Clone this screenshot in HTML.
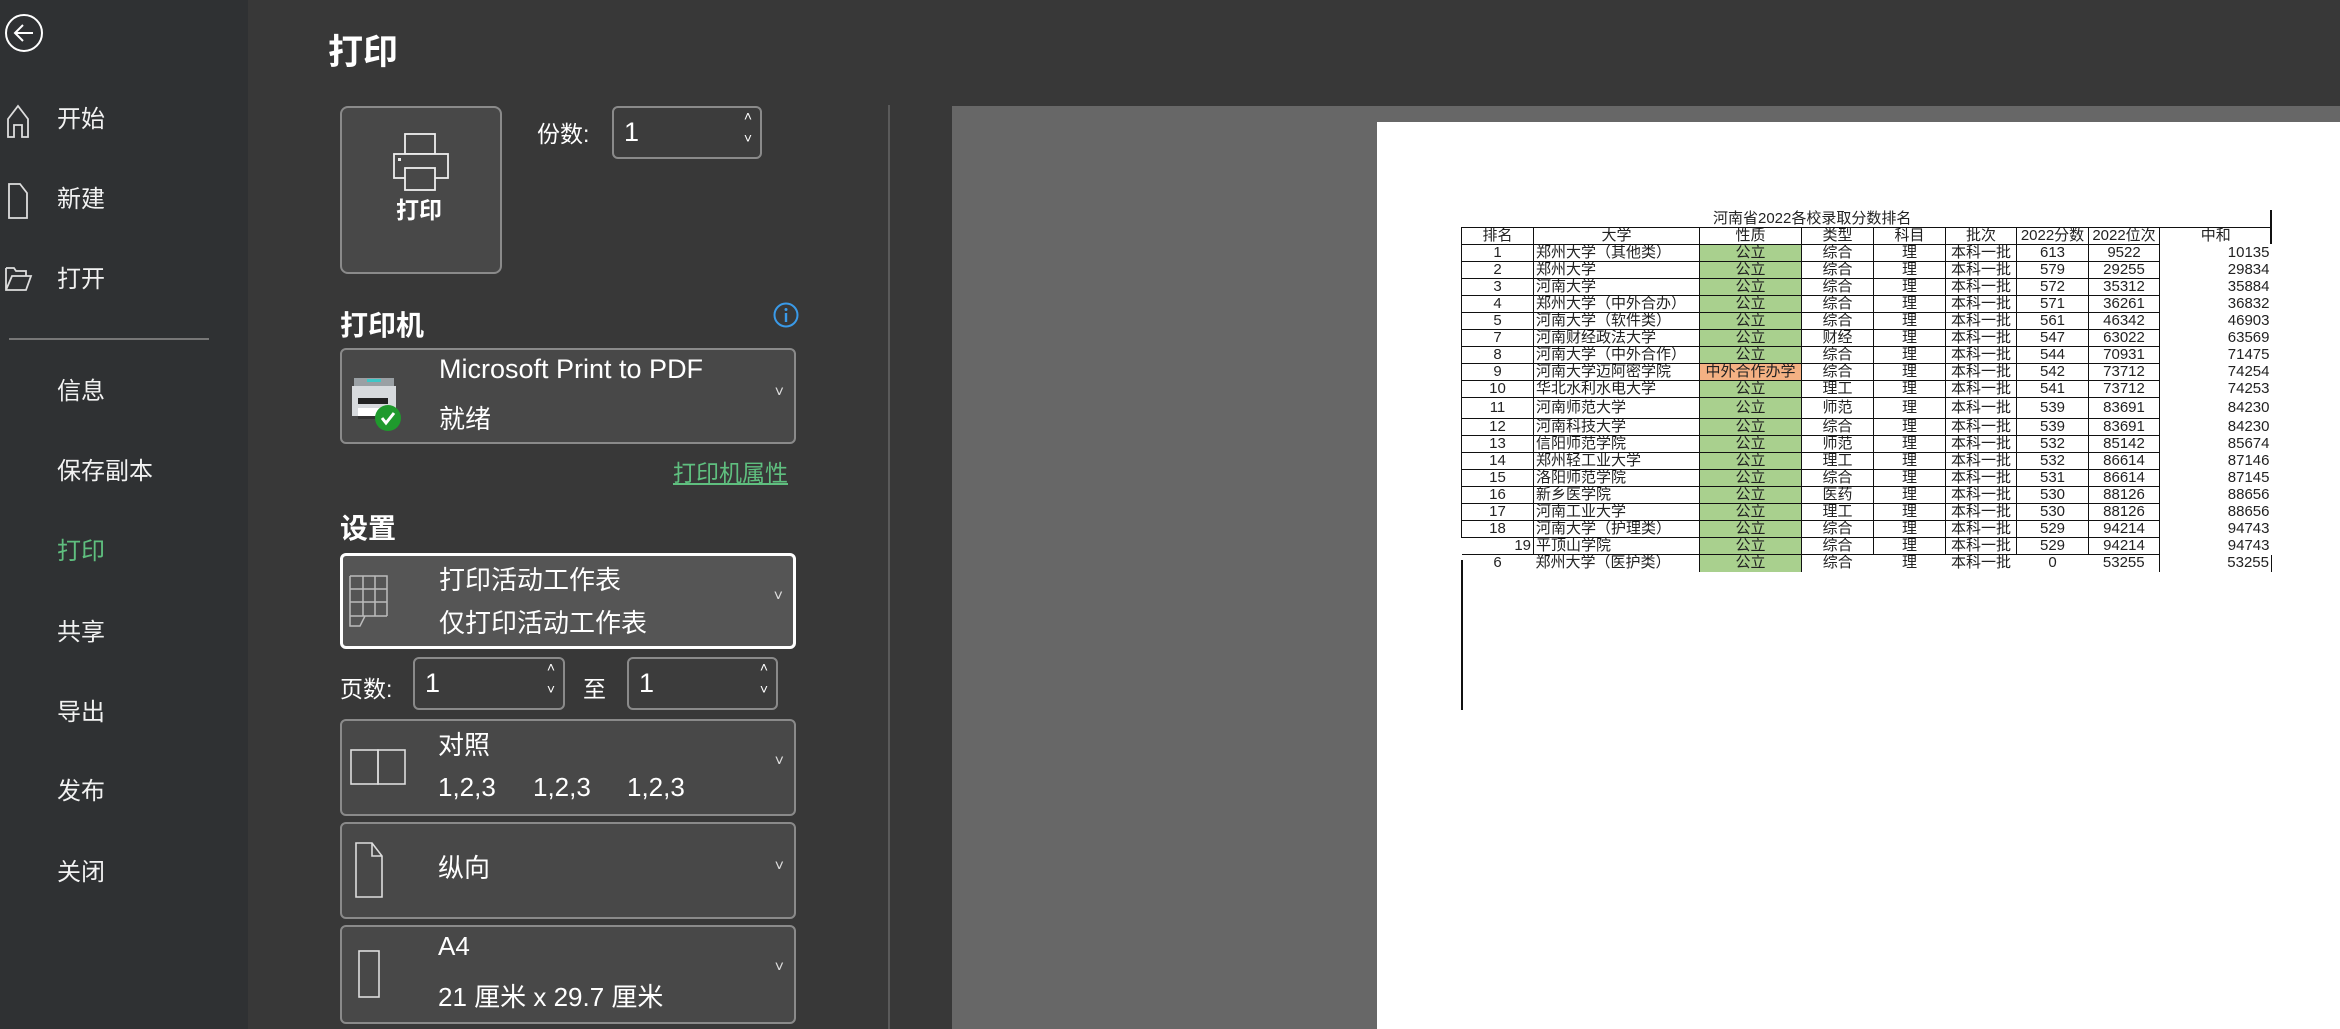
<!DOCTYPE html>
<html><head><meta charset="utf-8">
<style>
*{margin:0;padding:0;box-sizing:border-box}
body{width:2340px;height:1029px;overflow:hidden;background:#383838;font-family:"Liberation Sans","Noto Sans CJK SC",sans-serif;color:#fff;position:relative}
.abs{position:absolute}
#side{left:0;top:0;width:248px;height:1029px;background:#2f3133}
.nav{position:absolute;left:57px;font-size:24px;line-height:30px;color:#f2f2f2}
.box{position:absolute;border:2px solid #8a8a8a;border-radius:6px;background:#484848}
.chev{position:absolute;right:10px;font-size:16px;color:#ddd}
#page{left:1377px;top:122px;width:963px;height:907px;background:#fff}
table{border-collapse:collapse;position:absolute;left:1461px;top:227px;table-layout:fixed;font-size:15px;color:#222;font-family:"Liberation Sans","Noto Sans CJK SC",sans-serif}
td{border:1.4px solid #111;height:17px;line-height:14px;padding:0 2px;text-align:center;white-space:nowrap;overflow:hidden}
td.l{text-align:left}
td.z{border:none;text-align:right}
td.g{background:#a9d08e}
td.o{background:#f4b183}
tr.tall td{height:21px}
</style></head><body>
<div id="side" class="abs"></div>
<svg class="abs" style="left:4px;top:13px" width="42" height="42" viewBox="0 0 42 42"><circle cx="20" cy="20" r="18" fill="none" stroke="#fff" stroke-width="2"/><path d="M29 20H12M19 12l-8 8 8 8" fill="none" stroke="#fff" stroke-width="2"/></svg>
<svg class="abs" style="left:7px;top:104px" width="22" height="34" viewBox="0 0 22 34"><path d="M1 15L11 2l10 13v18h-6V21H7v12H1z" fill="none" stroke="#ddd" stroke-width="1.8"/></svg>
<div class="nav" style="top:105px">开始</div>
<svg class="abs" style="left:8px;top:183px" width="20" height="36" viewBox="0 0 20 36"><path d="M1 1h11l7 9v25H1z" fill="none" stroke="#ddd" stroke-width="1.8"/></svg>
<div class="nav" style="top:185px">新建</div>
<svg class="abs" style="left:5px;top:266px" width="28" height="26" viewBox="0 0 28 26"><path d="M1 2h8l2 3h10v5M1 2v22h20l5-14H7L1 24" fill="none" stroke="#ddd" stroke-width="1.8"/></svg>
<div class="nav" style="top:265px">打开</div>
<div class="abs" style="left:9px;top:338px;width:200px;height:2px;background:#777"></div>
<div class="nav" style="top:377px">信息</div>
<div class="nav" style="top:457px">保存副本</div>
<div class="nav" style="top:537px;color:#5fbf7f">打印</div>
<div class="nav" style="top:618px">共享</div>
<div class="nav" style="top:698px">导出</div>
<div class="nav" style="top:777px">发布</div>
<div class="nav" style="top:858px">关闭</div>

<div class="abs" style="left:328px;top:24px;font-size:35px;font-weight:bold">打印</div>
<div class="box" style="left:340px;top:106px;width:162px;height:168px;border-radius:8px">
<svg class="abs" style="left:50px;top:24px" width="60" height="60" viewBox="0 0 60 60"><rect x="13" y="2" width="30" height="20" fill="none" stroke="#eee" stroke-width="1.8"/><rect x="2" y="22" width="54" height="24" fill="#484848" stroke="#eee" stroke-width="1.8"/><rect x="13" y="36" width="30" height="22" fill="#484848" stroke="#eee" stroke-width="1.8"/><rect x="6" y="26" width="3" height="3" fill="#eee"/></svg>
<div class="abs" style="left:54px;top:83px;font-size:23px;font-weight:bold">打印</div></div>
<div class="abs" style="left:537px;top:115px;font-size:23px">份数:</div>
<div class="box" style="left:612px;top:106px;width:150px;height:53px;background:#3c3c3c"><div class="abs" style="left:10px;top:9px;font-size:27px">1</div><div class="abs" style="right:8px;top:0;font-size:14px">˄</div><div class="abs" style="right:8px;top:22px;font-size:14px">˅</div></div>
<div class="abs" style="left:888px;top:105px;width:2px;height:924px;background:#5a5a5a"></div>

<div class="abs" style="left:340px;top:304px;font-size:28px;font-weight:bold">打印机</div>
<svg class="abs" style="left:772px;top:301px" width="28" height="28" viewBox="0 0 28 28"><circle cx="14" cy="14" r="11.5" fill="none" stroke="#3a9ae8" stroke-width="2"/><rect x="12.8" y="12" width="2.4" height="9" fill="#3a9ae8"/><circle cx="14" cy="8.5" r="1.5" fill="#3a9ae8"/></svg>
<div class="box" style="left:340px;top:348px;width:456px;height:96px">
<svg class="abs" style="left:10px;top:26px" width="56" height="56" viewBox="0 0 56 56"><rect x="2" y="2" width="40" height="10" fill="#9aa0a4"/><rect x="15" y="3" width="14" height="3" fill="#3ec7c7"/><rect x="0" y="10" width="44" height="30" fill="#d7dadd"/><rect x="6" y="22" width="30" height="6" fill="#222"/><rect x="6" y="32" width="24" height="8" fill="#fff"/><rect x="6" y="40" width="22" height="3" fill="#333"/><circle cx="36" cy="42" r="13" fill="#1f9a2d"/><path d="M30 42l4 5 8-10" fill="none" stroke="#fff" stroke-width="3"/></svg>
<div class="abs" style="left:97px;top:4px;font-size:27px;white-space:nowrap">Microsoft Print to PDF</div>
<div class="abs" style="left:97px;top:49px;font-size:26px">就绪</div>
<div class="chev" style="top:34px">˅</div></div>
<div class="abs" style="left:673px;top:454px;font-size:23px;color:#5fbf7f;text-decoration:underline">打印机属性</div>

<div class="abs" style="left:340px;top:507px;font-size:28px;font-weight:bold">设置</div>
<div class="box" style="left:340px;top:553px;width:456px;height:96px;border:3px solid #fff;background:#555">
<svg class="abs" style="left:6px;top:19px" width="40" height="52" viewBox="0 0 40 52"><path d="M1 1h37v40M1 1v50h10l5-10M1 14h37M1 27h37M1 41h37M14 1v40M26 1v40" fill="none" stroke="#bbb" stroke-width="1.5"/></svg>
<div class="abs" style="left:96px;top:4px;font-size:26px">打印活动工作表</div>
<div class="abs" style="left:96px;top:47px;font-size:26px">仅打印活动工作表</div>
<div class="chev" style="top:32px">˅</div></div>

<div class="abs" style="left:340px;top:670px;font-size:23px">页数:</div>
<div class="box" style="left:413px;top:657px;width:152px;height:53px;background:#3c3c3c"><div class="abs" style="left:10px;top:9px;font-size:27px">1</div><div class="abs" style="right:8px;top:0;font-size:14px">˄</div><div class="abs" style="right:8px;top:22px;font-size:14px">˅</div></div>
<div class="abs" style="left:583px;top:670px;font-size:23px">至</div>
<div class="box" style="left:627px;top:657px;width:151px;height:53px;background:#3c3c3c"><div class="abs" style="left:10px;top:9px;font-size:27px">1</div><div class="abs" style="right:8px;top:0;font-size:14px">˄</div><div class="abs" style="right:8px;top:22px;font-size:14px">˅</div></div>

<div class="box" style="left:340px;top:719px;width:456px;height:97px">
<svg class="abs" style="left:8px;top:28px" width="60" height="38" viewBox="0 0 60 38"><rect x="1" y="1" width="27" height="34" fill="none" stroke="#ddd" stroke-width="1.6"/><rect x="28" y="1" width="27" height="34" fill="none" stroke="#ddd" stroke-width="1.6"/></svg>
<div class="abs" style="left:96px;top:4px;font-size:26px">对照</div>
<div class="abs" style="left:96px;top:51px;font-size:26px">1,2,3</div>
<div class="abs" style="left:191px;top:51px;font-size:26px">1,2,3</div>
<div class="abs" style="left:285px;top:51px;font-size:26px">1,2,3</div>
<div class="chev" style="top:32px">˅</div></div>

<div class="box" style="left:340px;top:822px;width:456px;height:97px">
<svg class="abs" style="left:13px;top:18px" width="30" height="58" viewBox="0 0 30 58"><path d="M1 1h16l10 13v41H1z M17 1v13h10" fill="none" stroke="#ddd" stroke-width="1.6"/></svg>
<div class="abs" style="left:96px;top:24px;font-size:26px">纵向</div>
<div class="chev" style="top:34px">˅</div></div>

<div class="box" style="left:340px;top:925px;width:456px;height:99px">
<svg class="abs" style="left:16px;top:23px" width="24" height="50" viewBox="0 0 24 50"><rect x="1" y="1" width="20" height="46" fill="none" stroke="#ddd" stroke-width="1.6"/></svg>
<div class="abs" style="left:96px;top:4px;font-size:26px">A4</div>
<div class="abs" style="left:96px;top:50px;font-size:26px">21 厘米 x 29.7 厘米</div>
<div class="chev" style="top:32px">˅</div></div>

<div class="abs" style="left:952px;top:106px;width:1388px;height:923px;background:#676767"></div>
<div id="page" class="abs"></div>
<div class="abs" style="left:1713px;top:207px;font-size:15px;color:#222;white-space:nowrap">河南省2022各校录取分数排名</div>
<div class="abs" style="left:2270px;top:210px;width:1.5px;height:34px;background:#111"></div>
<div class="abs" style="left:1461px;top:560px;width:1.5px;height:150px;background:#111"></div>
<table>
<colgroup><col style="width:72px"><col style="width:166px"><col style="width:102px"><col style="width:72px"><col style="width:72px"><col style="width:71px"><col style="width:72px"><col style="width:71px"><col style="width:112px"></colgroup>
<tr><td>排名</td><td>大学</td><td>性质</td><td>类型</td><td>科目</td><td>批次</td><td>2022分数</td><td>2022位次</td><td class="z" style="text-align:center;border-top:1.4px solid #111">中和</td></tr>
<tr><td>1</td><td class="l">郑州大学（其他类）</td><td class="g">公立</td><td>综合</td><td>理</td><td>本科一批</td><td>613</td><td>9522</td><td class="z">10135</td></tr>
<tr><td>2</td><td class="l">郑州大学</td><td class="g">公立</td><td>综合</td><td>理</td><td>本科一批</td><td>579</td><td>29255</td><td class="z">29834</td></tr>
<tr><td>3</td><td class="l">河南大学</td><td class="g">公立</td><td>综合</td><td>理</td><td>本科一批</td><td>572</td><td>35312</td><td class="z">35884</td></tr>
<tr><td>4</td><td class="l">郑州大学（中外合办）</td><td class="g">公立</td><td>综合</td><td>理</td><td>本科一批</td><td>571</td><td>36261</td><td class="z">36832</td></tr>
<tr><td>5</td><td class="l">河南大学（软件类）</td><td class="g">公立</td><td>综合</td><td>理</td><td>本科一批</td><td>561</td><td>46342</td><td class="z">46903</td></tr>
<tr><td>7</td><td class="l">河南财经政法大学</td><td class="g">公立</td><td>财经</td><td>理</td><td>本科一批</td><td>547</td><td>63022</td><td class="z">63569</td></tr>
<tr><td>8</td><td class="l">河南大学（中外合作）</td><td class="g">公立</td><td>综合</td><td>理</td><td>本科一批</td><td>544</td><td>70931</td><td class="z">71475</td></tr>
<tr><td>9</td><td class="l">河南大学迈阿密学院</td><td class="o">中外合作办学</td><td>综合</td><td>理</td><td>本科一批</td><td>542</td><td>73712</td><td class="z">74254</td></tr>
<tr><td>10</td><td class="l">华北水利水电大学</td><td class="g">公立</td><td>理工</td><td>理</td><td>本科一批</td><td>541</td><td>73712</td><td class="z">74253</td></tr>
<tr class="tall"><td>11</td><td class="l">河南师范大学</td><td class="g">公立</td><td>师范</td><td>理</td><td>本科一批</td><td>539</td><td>83691</td><td class="z">84230</td></tr>
<tr><td>12</td><td class="l">河南科技大学</td><td class="g">公立</td><td>综合</td><td>理</td><td>本科一批</td><td>539</td><td>83691</td><td class="z">84230</td></tr>
<tr><td>13</td><td class="l">信阳师范学院</td><td class="g">公立</td><td>师范</td><td>理</td><td>本科一批</td><td>532</td><td>85142</td><td class="z">85674</td></tr>
<tr><td>14</td><td class="l">郑州轻工业大学</td><td class="g">公立</td><td>理工</td><td>理</td><td>本科一批</td><td>532</td><td>86614</td><td class="z">87146</td></tr>
<tr><td>15</td><td class="l">洛阳师范学院</td><td class="g">公立</td><td>综合</td><td>理</td><td>本科一批</td><td>531</td><td>86614</td><td class="z">87145</td></tr>
<tr><td>16</td><td class="l">新乡医学院</td><td class="g">公立</td><td>医药</td><td>理</td><td>本科一批</td><td>530</td><td>88126</td><td class="z">88656</td></tr>
<tr><td>17</td><td class="l">河南工业大学</td><td class="g">公立</td><td>理工</td><td>理</td><td>本科一批</td><td>530</td><td>88126</td><td class="z">88656</td></tr>
<tr><td>18</td><td class="l">河南大学（护理类）</td><td class="g">公立</td><td>综合</td><td>理</td><td>本科一批</td><td>529</td><td>94214</td><td class="z">94743</td></tr>
<tr><td style="text-align:right;border-left:none">19</td><td class="l">平顶山学院</td><td class="g">公立</td><td>综合</td><td>理</td><td>本科一批</td><td>529</td><td>94214</td><td class="z">94743</td></tr>
<tr><td style="border:none">6</td><td class="l" style="border:none">郑州大学（医护类）</td><td class="g" style="border-bottom:none">公立</td><td style="border:none">综合</td><td style="border:none">理</td><td style="border:none">本科一批</td><td style="border:none">0</td><td style="border-top:none;border-bottom:none;border-left:none">53255</td><td class="z" style="border-right:1.4px solid #111">53255</td></tr>
</table>
</body></html>
